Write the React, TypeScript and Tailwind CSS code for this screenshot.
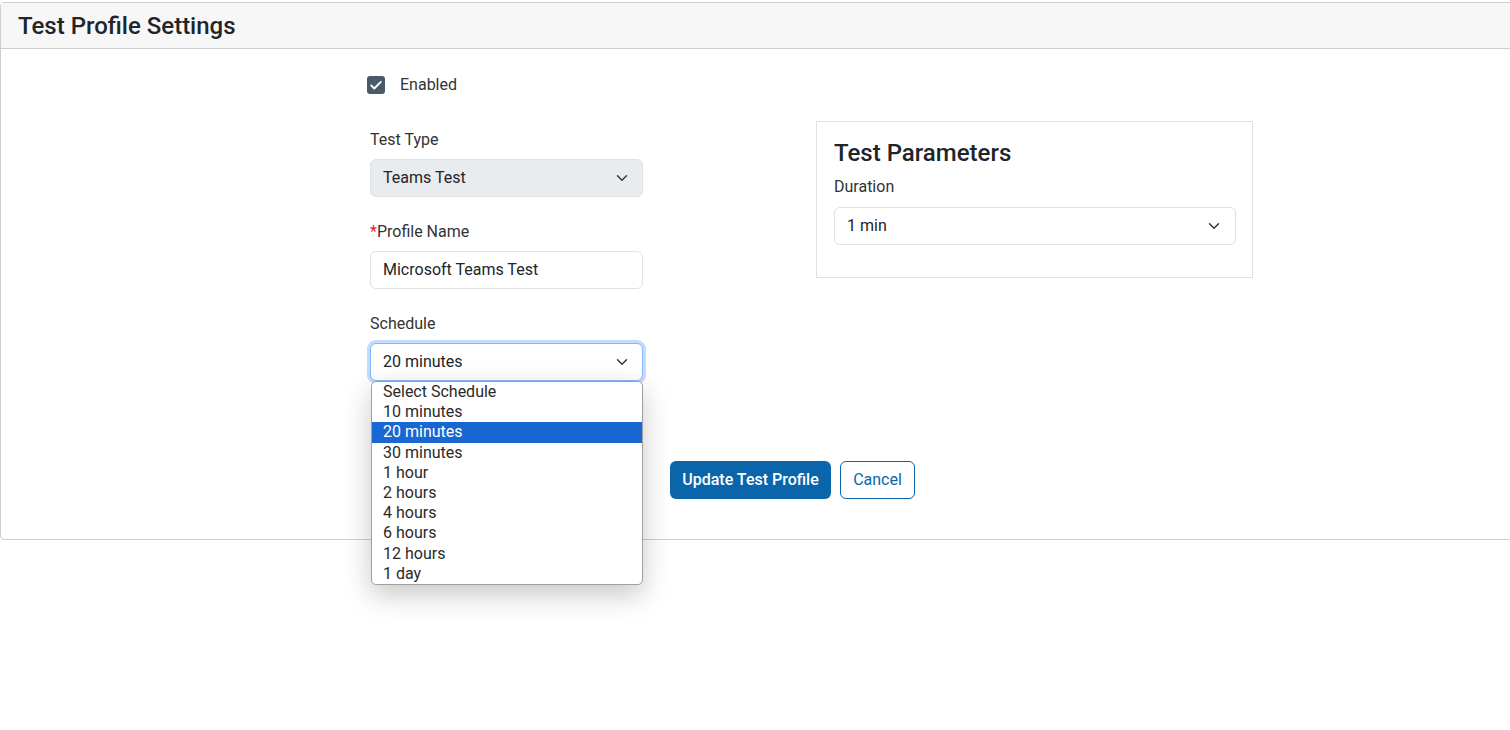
import React from 'react';

const Chevron = () => (
  <svg width="12" height="12" viewBox="0 0 16 16" fill="none" className="shrink-0">
    <path d="m2 5 6 6 6-6" stroke="#343a40" strokeWidth="2" strokeLinecap="round" strokeLinejoin="round" />
  </svg>
);

const scheduleOptions = [
  'Select Schedule',
  '10 minutes',
  '20 minutes',
  '30 minutes',
  '1 hour',
  '2 hours',
  '4 hours',
  '6 hours',
  '12 hours',
  '1 day',
];

const App: React.FC = () => {
  return (
    <div
      className="min-h-screen bg-white pt-[2px] text-[#212529] overflow-hidden"
      style={{ fontFamily: 'Roboto, "Liberation Sans", sans-serif' }}
    >
      {/* Card */}
      <div className="w-[1520px] border border-[#cfcfcf] rounded-[4px] bg-white">
        {/* Header */}
        <div className="h-[46px] bg-[#f7f7f7] border-b border-[#cfcfcf] pl-[17px] flex items-center">
          <h1 className="text-[24px] font-medium leading-none text-[#212529]">Test Profile Settings</h1>
        </div>

        {/* Body */}
        <div className="pt-[27px] pl-[369px] pb-[40px]">
          <div className="flex">
            {/* Left column */}
            <div className="w-[273px] flex flex-col">
              <div className="flex items-center h-[18px] -ml-[3px]">
                <div className="w-[18px] h-[18px] rounded-[3px] bg-[#4a5a68] flex items-center justify-center">
                  <svg width="14" height="14" viewBox="0 0 16 16" fill="none">
                    <path d="m2.5 8.5 3.5 3.5L13.5 4.5" stroke="#fff" strokeWidth="2.2" strokeLinecap="round" strokeLinejoin="round" />
                  </svg>
                </div>
                <span className="ml-[15px] text-[16px] text-[#333]">Enabled</span>
              </div>

              <label className="mt-[34px] text-[16px] leading-6 text-[#333]">Test Type</label>
              <div className="mt-[7px] h-[38px] rounded-[6px] border border-[#dee2e6] bg-[#e9ecef] flex items-center justify-between pl-[12px] pr-[14px]">
                <span className="text-[16px]">Teams Test</span>
                <Chevron />
              </div>

              <label className="mt-[23px] text-[16px] leading-6 text-[#333]">
                <span className="text-[#e02424]">*</span>Profile Name
              </label>
              <div className="mt-[7px] h-[38px] rounded-[6px] border border-[#dee2e6] bg-white flex items-center pl-[12px]">
                <span className="text-[16px]">Microsoft Teams Test</span>
              </div>

              <label className="mt-[23px] text-[16px] leading-6 text-[#333]">Schedule</label>
              <div className="relative mt-[7px]">
                <div className="h-[38px] rounded-[6px] border border-[#86b7fe] shadow-[0_0_0_3px_rgba(13,110,253,0.25)] bg-white flex items-center justify-between pl-[12px] pr-[14px]">
                  <span className="text-[16px]">20 minutes</span>
                  <Chevron />
                </div>
                {/* Open native-style dropdown */}
                <div className="absolute z-10 top-[38px] left-[1px] w-[272px] bg-white border border-[#a0a0a0] rounded-[5px] shadow-[0_10px_28px_rgba(0,0,0,0.22)] overflow-hidden">
                  {scheduleOptions.map((o) => (
                    <div
                      key={o}
                      className={
                        o === '20 minutes'
                          ? 'h-[20.2px] leading-[20.2px] pl-[11px] text-[16px] bg-[#1967d2] text-white'
                          : 'h-[20.2px] leading-[20.2px] pl-[11px] text-[16px] text-[#2a2a2a]'
                      }
                    >
                      {o}
                    </div>
                  ))}
                </div>
              </div>
            </div>

            {/* Right panel */}
            <div className="ml-[173px] mt-[45px] w-[437px] h-[157px] border border-[#dee2e6] pt-[17px] pl-[17px] pr-[16px]">
              <h2 className="text-[24px] font-medium leading-[29px] text-[#212529]">Test Parameters</h2>
              <div className="mt-[7px] text-[16px] leading-6 text-[#333]">Duration</div>
              <div className="mt-[8px] h-[38px] rounded-[6px] border border-[#dee2e6] bg-white flex items-center justify-between pl-[12px] pr-[15px]">
                <span className="text-[16px]">1 min</span>
                <Chevron />
              </div>
            </div>
          </div>

          {/* Buttons */}
          <div className="mt-[80px] ml-[300px] flex gap-[9px]">
            <button className="h-[38px] w-[161px] rounded-[6px] bg-[#0b65aa] text-white text-[16px] font-medium">
              Update Test Profile
            </button>
            <button className="h-[38px] w-[75px] rounded-[6px] border border-[#0b65aa] text-[#0b65aa] text-[16px] bg-white">
              Cancel
            </button>
          </div>
        </div>
      </div>
    </div>
  );
};

export default App;
